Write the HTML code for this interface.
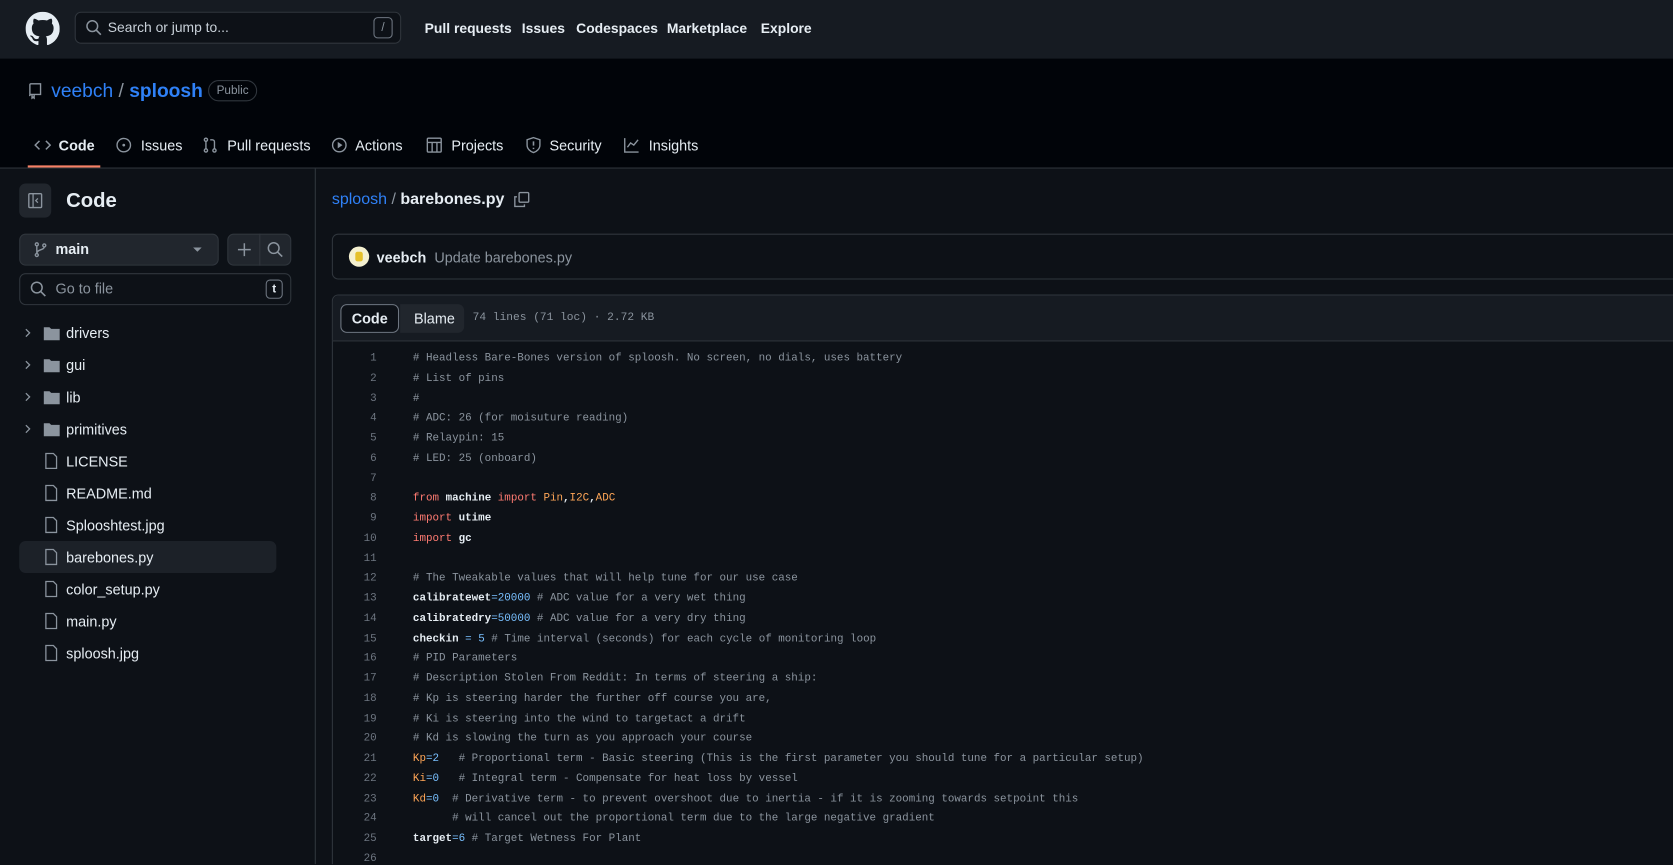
<!DOCTYPE html>
<html><head><meta charset="utf-8"><style>
*{box-sizing:border-box;margin:0;padding:0}
body{width:1673px;height:865px;overflow:hidden;background:#0d1117;font-family:"Liberation Sans",sans-serif;color:#e6edf3;font-size:14px;position:relative}
#w{position:absolute;left:0;top:0;width:1568px;height:810px;transform:scale(1.067);transform-origin:0 0;overflow:hidden}
.abs{position:absolute}
.top{left:0;top:0;width:1568px;height:55px;background:#161b22}
.repo{left:0;top:55px;width:1568px;height:103px;background:#010409;border-bottom:1px solid #30363d}
.nav a{position:absolute;top:19px;color:#e6edf3;font-weight:bold;font-size:13px}
.tabs span{position:absolute;top:129px;font-size:13.5px;color:#e6edf3}
svg{position:absolute}
.side{left:0;top:158px;width:296px;height:652px;border-right:1px solid #30363d}
.file{position:absolute;left:62px;font-size:13.5px;color:#e6edf3}
pre{font-family:"Liberation Mono",monospace;font-size:10.2px;line-height:18.75px;color:#c9d1d9;position:absolute}
.c{color:#8b949e}.k{color:#ff7b72}.n{color:#79c0ff}.o{color:#ffa657}.w{color:#e6edf3;font-weight:bold}
.ln{color:#6e7681;text-align:right;width:40px}
</style></head><body><div id="w">
<div class="abs top"></div>
<svg style="left:24px;top:11px" width="32" height="32" viewBox="0 0 16 16"><path fill="#e6edf3" d="M8 0C3.58 0 0 3.58 0 8c0 3.540 2.29 6.53 5.47 7.59.4.07.55-.17.55-.38 0-.19-.01-.82-.01-1.49-2.01.37-2.53-.49-2.690-.94-.09-.23-.48-.94-.82-1.13-.28-.15-.68-.52-.01-.53.63-.01 1.080.58 1.23.82.72 1.21 1.87.87 2.33.66.07-.52.28-.87.51-1.07-1.78-.2-3.640-.89-3.640-3.95 0-.87.31-1.59.82-2.15-.08-.2-.36-1.02.08-2.12 0 0 .67-.21 2.2.82.64-.18 1.32-.27 2-.27.68 0 1.36.09 2 .27 1.53-1.04 2.2-.82 2.2-.82.44 1.1.16 1.92.08 2.12.51.56.82 1.27.82 2.15 0 3.07-1.87 3.75-3.65 3.95.29.25.54.73.54 1.48 0 1.07-.01 1.93-.01 2.2 0 .21.15.46.55.38A8.013 8.013 0 0016 8c0-4.42-3.58-8-8-8z"/></svg>
<div class="abs" style="left:70px;top:11px;width:306px;height:30px;border:1px solid #30363d;border-radius:6px;background:#0d1117"></div>
<svg style="left:80px;top:18px" width="16" height="16" viewBox="0 0 16 16"><circle cx="6.5" cy="6.5" r="5" fill="none" stroke="#8b949e" stroke-width="1.4"/><path d="M10 10l4.5 4.5" stroke="#8b949e" stroke-width="1.5"/></svg>
<div class="abs" style="left:101px;top:18px;color:#c9d1d9;font-size:13px">Search or jump to...</div>
<div class="abs" style="left:350px;top:16px;width:18px;height:20px;border:1px solid #6e7681;border-radius:4px;color:#8b949e;font-size:11px;text-align:center;line-height:18px">/</div>
<div class="nav"><a style="left:398px">Pull requests</a><a style="left:489px">Issues</a><a style="left:540px">Codespaces</a><a style="left:625px">Marketplace</a><a style="left:713px">Explore</a></div>

<div class="abs repo"></div>
<svg style="left:25px;top:77px" width="16" height="16" viewBox="0 0 16 16"><path fill="none" stroke="#8b949e" stroke-width="1.3" d="M3 13V2.5A1 1 0 014 1.5h9v10H4a1 1 0 00-1 1.5M5 12v3l1-1 1 1v-3"/></svg>
<div class="abs" style="left:48px;top:75px;font-size:18px;color:#2f81f7">veebch <span style="color:#8b949e">/</span> <b>sploosh</b></div>
<div class="abs" style="left:195px;top:75px;height:20px;padding:0 7px;border:1px solid #30363d;border-radius:10px;font-size:11px;color:#8b949e;line-height:18px">Public</div>
<div class="tabs">
<svg style="left:32px;top:128px" width="16" height="16" viewBox="0 0 16 16"><path d="M5 4L1 8l4 4M11 4l4 4-4 4" fill="none" stroke="#8b949e" stroke-width="1.4"/></svg><span style="left:55px;font-weight:bold">Code</span>
<svg style="left:108px;top:128px" width="16" height="16" viewBox="0 0 16 16"><circle cx="8" cy="8" r="6.3" fill="none" stroke="#8b949e" stroke-width="1.3"/><circle cx="8" cy="8" r="1.3" fill="#8b949e"/></svg><span style="left:132px">Issues</span>
<svg style="left:189px;top:128px" width="16" height="16" viewBox="0 0 16 16"><g fill="none" stroke="#8b949e" stroke-width="1.3"><circle cx="4" cy="3" r="1.5"/><circle cx="4" cy="13" r="1.5"/><circle cx="12" cy="13" r="1.5"/><path d="M4 4.5v7M12 11.5V5a2 2 0 00-2-2H8"/></g></svg><span style="left:213px">Pull requests</span>
<svg style="left:310px;top:128px" width="16" height="16" viewBox="0 0 16 16"><circle cx="8" cy="8" r="6.3" fill="none" stroke="#8b949e" stroke-width="1.3"/><path d="M6.5 5v6l4.5-3z" fill="#8b949e"/></svg><span style="left:333px">Actions</span>
<svg style="left:399px;top:128px" width="16" height="16" viewBox="0 0 16 16"><g fill="none" stroke="#8b949e" stroke-width="1.3"><rect x="1.5" y="1.5" width="13" height="13" rx="1"/><path d="M1.5 5.5h13M6 5.5v9M10.5 5.5v9"/></g></svg><span style="left:423px">Projects</span>
<svg style="left:492px;top:128px" width="16" height="16" viewBox="0 0 16 16"><path d="M8 1l6 2v5c0 3.5-3 6-6 7-3-1-6-3.5-6-7V3z" fill="none" stroke="#8b949e" stroke-width="1.3"/><path d="M8 4.5v4M8 10.5v1.3" stroke="#8b949e" stroke-width="1.5"/></svg><span style="left:515px">Security</span>
<svg style="left:584px;top:128px" width="16" height="16" viewBox="0 0 16 16"><path d="M1.5 1.5v13h13M4 10l3-4 3 2 4-5" fill="none" stroke="#8b949e" stroke-width="1.3"/></svg><span style="left:608px">Insights</span>
</div>
<div class="abs" style="left:26px;top:155px;width:68px;height:2px;background:#f78166"></div>

<div class="abs side"></div>
<div class="abs" style="left:18px;top:172px;width:30px;height:32px;background:#21262d;border-radius:6px"></div>
<svg style="left:25px;top:180px" width="16" height="16" viewBox="0 0 16 16"><rect x="2" y="1.5" width="12" height="13" rx="1" fill="none" stroke="#8b949e" stroke-width="1.3"/><path d="M6 1.5v13M10.5 6l-2 2 2 2" fill="none" stroke="#8b949e" stroke-width="1.2"/></svg>
<div class="abs" style="left:62px;top:178px;font-size:19px;font-weight:bold">Code</div>
<div class="abs" style="left:18px;top:219px;width:187px;height:30px;background:#21262d;border:1px solid #30363d;border-radius:6px"></div>
<svg style="left:30px;top:226px" width="16" height="16" viewBox="0 0 16 16"><g fill="none" stroke="#8b949e" stroke-width="1.3"><circle cx="4.5" cy="3" r="1.4"/><circle cx="4.5" cy="13" r="1.4"/><circle cx="11.5" cy="4" r="1.4"/><path d="M4.5 4.5v7M11.5 5.5c0 3-7 2-7 6"/></g></svg>
<div class="abs" style="left:52px;top:226px;font-weight:bold;font-size:13.5px">main</div>
<div class="abs" style="left:181px;top:232px;border:4px solid transparent;border-top-color:#8b949e"></div>
<div class="abs" style="left:213px;top:219px;width:60px;height:30px;background:#21262d;border:1px solid #30363d;border-radius:6px"></div>
<div class="abs" style="left:243px;top:219px;width:1px;height:30px;background:#30363d"></div>
<svg style="left:221px;top:226px" width="16" height="16" viewBox="0 0 16 16"><path d="M8 2v12M2 8h12" stroke="#8b949e" stroke-width="1.4"/></svg>
<svg style="left:250px;top:226px" width="16" height="16" viewBox="0 0 16 16"><circle cx="6.5" cy="6.5" r="5" fill="none" stroke="#8b949e" stroke-width="1.4"/><path d="M10 10l4.5 4.5" stroke="#8b949e" stroke-width="1.5"/></svg>
<div class="abs" style="left:18px;top:256px;width:255px;height:30px;border:1px solid #30363d;border-radius:6px"></div>
<svg style="left:28px;top:263px" width="16" height="16" viewBox="0 0 16 16"><circle cx="6.5" cy="6.5" r="5" fill="none" stroke="#8b949e" stroke-width="1.4"/><path d="M10 10l4.5 4.5" stroke="#8b949e" stroke-width="1.5"/></svg>
<div class="abs" style="left:52px;top:263px;color:#8b949e;font-size:13.5px">Go to file</div>
<div class="abs" style="left:249px;top:262px;width:16px;height:18px;border:1px solid #6e7681;border-radius:4px;font-size:11px;text-align:center;line-height:16px;font-weight:bold">t</div>
<div class="abs" style="left:18px;top:507px;width:241px;height:30px;background:#1c2128;border-radius:6px"></div>
<svg width="0" height="0"><defs>
<symbol id="fo" viewBox="0 0 16 16"><path d="M1 2.5h5l1.5 1.5H15v10H1z" fill="#8b949e"/></symbol>
<symbol id="fi" viewBox="0 0 16 16"><path d="M3 1h7l3 3v11H3z" fill="none" stroke="#8b949e" stroke-width="1.2"/></symbol>
<symbol id="ch" viewBox="0 0 16 16"><path d="M6 4l4 4-4 4" fill="none" stroke="#8b949e" stroke-width="1.4"/></symbol></defs></svg>
<svg style="left:19px;top:305px" width="14" height="14"><use href="#ch"/></svg><svg style="left:40px;top:304px" width="17" height="17"><use href="#fo"/></svg><div class="file" style="top:305px">drivers</div>
<svg style="left:19px;top:335px" width="14" height="14"><use href="#ch"/></svg><svg style="left:40px;top:334px" width="17" height="17"><use href="#fo"/></svg><div class="file" style="top:335px">gui</div>
<svg style="left:19px;top:365px" width="14" height="14"><use href="#ch"/></svg><svg style="left:40px;top:364px" width="17" height="17"><use href="#fo"/></svg><div class="file" style="top:365px">lib</div>
<svg style="left:19px;top:395px" width="14" height="14"><use href="#ch"/></svg><svg style="left:40px;top:394px" width="17" height="17"><use href="#fo"/></svg><div class="file" style="top:395px">primitives</div>
<svg style="left:40px;top:424px" width="16" height="16"><use href="#fi"/></svg><div class="file" style="top:425px">LICENSE</div>
<svg style="left:40px;top:454px" width="16" height="16"><use href="#fi"/></svg><div class="file" style="top:455px">README.md</div>
<svg style="left:40px;top:484px" width="16" height="16"><use href="#fi"/></svg><div class="file" style="top:485px">Splooshtest.jpg</div>
<svg style="left:40px;top:514px" width="16" height="16"><use href="#fi"/></svg><div class="file" style="top:515px">barebones.py</div>
<svg style="left:40px;top:544px" width="16" height="16"><use href="#fi"/></svg><div class="file" style="top:545px">color_setup.py</div>
<svg style="left:40px;top:574px" width="16" height="16"><use href="#fi"/></svg><div class="file" style="top:575px">main.py</div>
<svg style="left:40px;top:604px" width="16" height="16"><use href="#fi"/></svg><div class="file" style="top:605px">sploosh.jpg</div>

<div class="abs" style="left:311px;top:178px;font-size:15px"><span style="color:#2f81f7">sploosh</span> <span style="color:#8b949e">/</span> <b>barebones.py</b></div>
<svg style="left:481px;top:179px" width="16" height="16" viewBox="0 0 16 16"><g fill="none" stroke="#8b949e" stroke-width="1.3"><rect x="5.5" y="1.5" width="9" height="9" rx="1"/><path d="M3.5 5.5h-2v9h9v-2"/></g></svg>
<div class="abs" style="left:311px;top:219px;width:1300px;height:43px;border:1px solid #30363d;border-radius:6px"></div>
<div class="abs" style="left:327px;top:231px;width:19px;height:19px;border-radius:50%;background:#f4f0d0"></div>
<div class="abs" style="left:333px;top:236px;width:7px;height:9px;background:#e5c02a;border-radius:2px"></div>
<div class="abs" style="left:353px;top:234px;font-size:13.5px"><b>veebch</b> <span style="color:#8b949e">&nbsp;Update barebones.py</span></div>
<div class="abs" style="left:311px;top:276px;width:1300px;height:540px;border:1px solid #30363d;border-radius:6px"></div>
<div class="abs" style="left:312px;top:277px;width:1290px;height:43px;background:#161b22;border-bottom:1px solid #30363d;border-radius:6px 0 0 0"></div>
<div class="abs" style="left:375px;top:285px;width:60px;height:27px;background:#21262d;border-radius:0 6px 6px 0"></div>
<div class="abs" style="left:319px;top:285px;width:55px;height:27px;background:#0d1117;border:1px solid #6e7681;border-radius:6px;font-weight:bold;text-align:center;line-height:25px;font-size:13.5px">Code</div>
<div class="abs" style="left:388px;top:291px;font-size:13.5px">Blame</div>
<div class="abs" style="left:443px;top:292px;font-family:'Liberation Mono',monospace;font-size:10.5px;color:#8b949e">74 lines (71 loc) · 2.72 KB</div>
<pre class="ln" style="left:313px;top:328px">1
2
3
4
5
6
7
8
9
10
11
12
13
14
15
16
17
18
19
20
21
22
23
24
25
26</pre>
<pre style="left:387px;top:328px"><span class="c"># Headless Bare-Bones version of sploosh. No screen, no dials, uses battery
# List of pins
#
# ADC: 26 (for moisuture reading)
# Relaypin: 15
# LED: 25 (onboard)</span>

<span class="k">from</span> <span class="w">machine</span> <span class="k">import</span> <span class="o">Pin</span><span class="w">,</span><span class="o">I2C</span><span class="w">,</span><span class="o">ADC</span>
<span class="k">import</span> <span class="w">utime</span>
<span class="k">import</span> <span class="w">gc</span>

<span class="c"># The Tweakable values that will help tune for our use case</span>
<span class="w">calibratewet</span><span class="n">=20000</span> <span class="c"># ADC value for a very wet thing</span>
<span class="w">calibratedry</span><span class="n">=50000</span> <span class="c"># ADC value for a very dry thing</span>
<span class="w">checkin</span> <span class="n">=</span> <span class="n">5</span> <span class="c"># Time interval (seconds) for each cycle of monitoring loop</span>
<span class="c"># PID Parameters
# Description Stolen From Reddit: In terms of steering a ship:
# Kp is steering harder the further off course you are,
# Ki is steering into the wind to targetact a drift
# Kd is slowing the turn as you approach your course</span>
<span class="o">Kp</span><span class="n">=2</span>   <span class="c"># Proportional term - Basic steering (This is the first parameter you should tune for a particular setup)</span>
<span class="o">Ki</span><span class="n">=0</span>   <span class="c"># Integral term - Compensate for heat loss by vessel</span>
<span class="o">Kd</span><span class="n">=0</span>  <span class="c"># Derivative term - to prevent overshoot due to inertia - if it is zooming towards setpoint this</span>
      <span class="c"># will cancel out the proportional term due to the large negative gradient</span>
<span class="w">target</span><span class="n">=6</span> <span class="c"># Target Wetness For Plant</span>
</pre>
</div></body></html>
